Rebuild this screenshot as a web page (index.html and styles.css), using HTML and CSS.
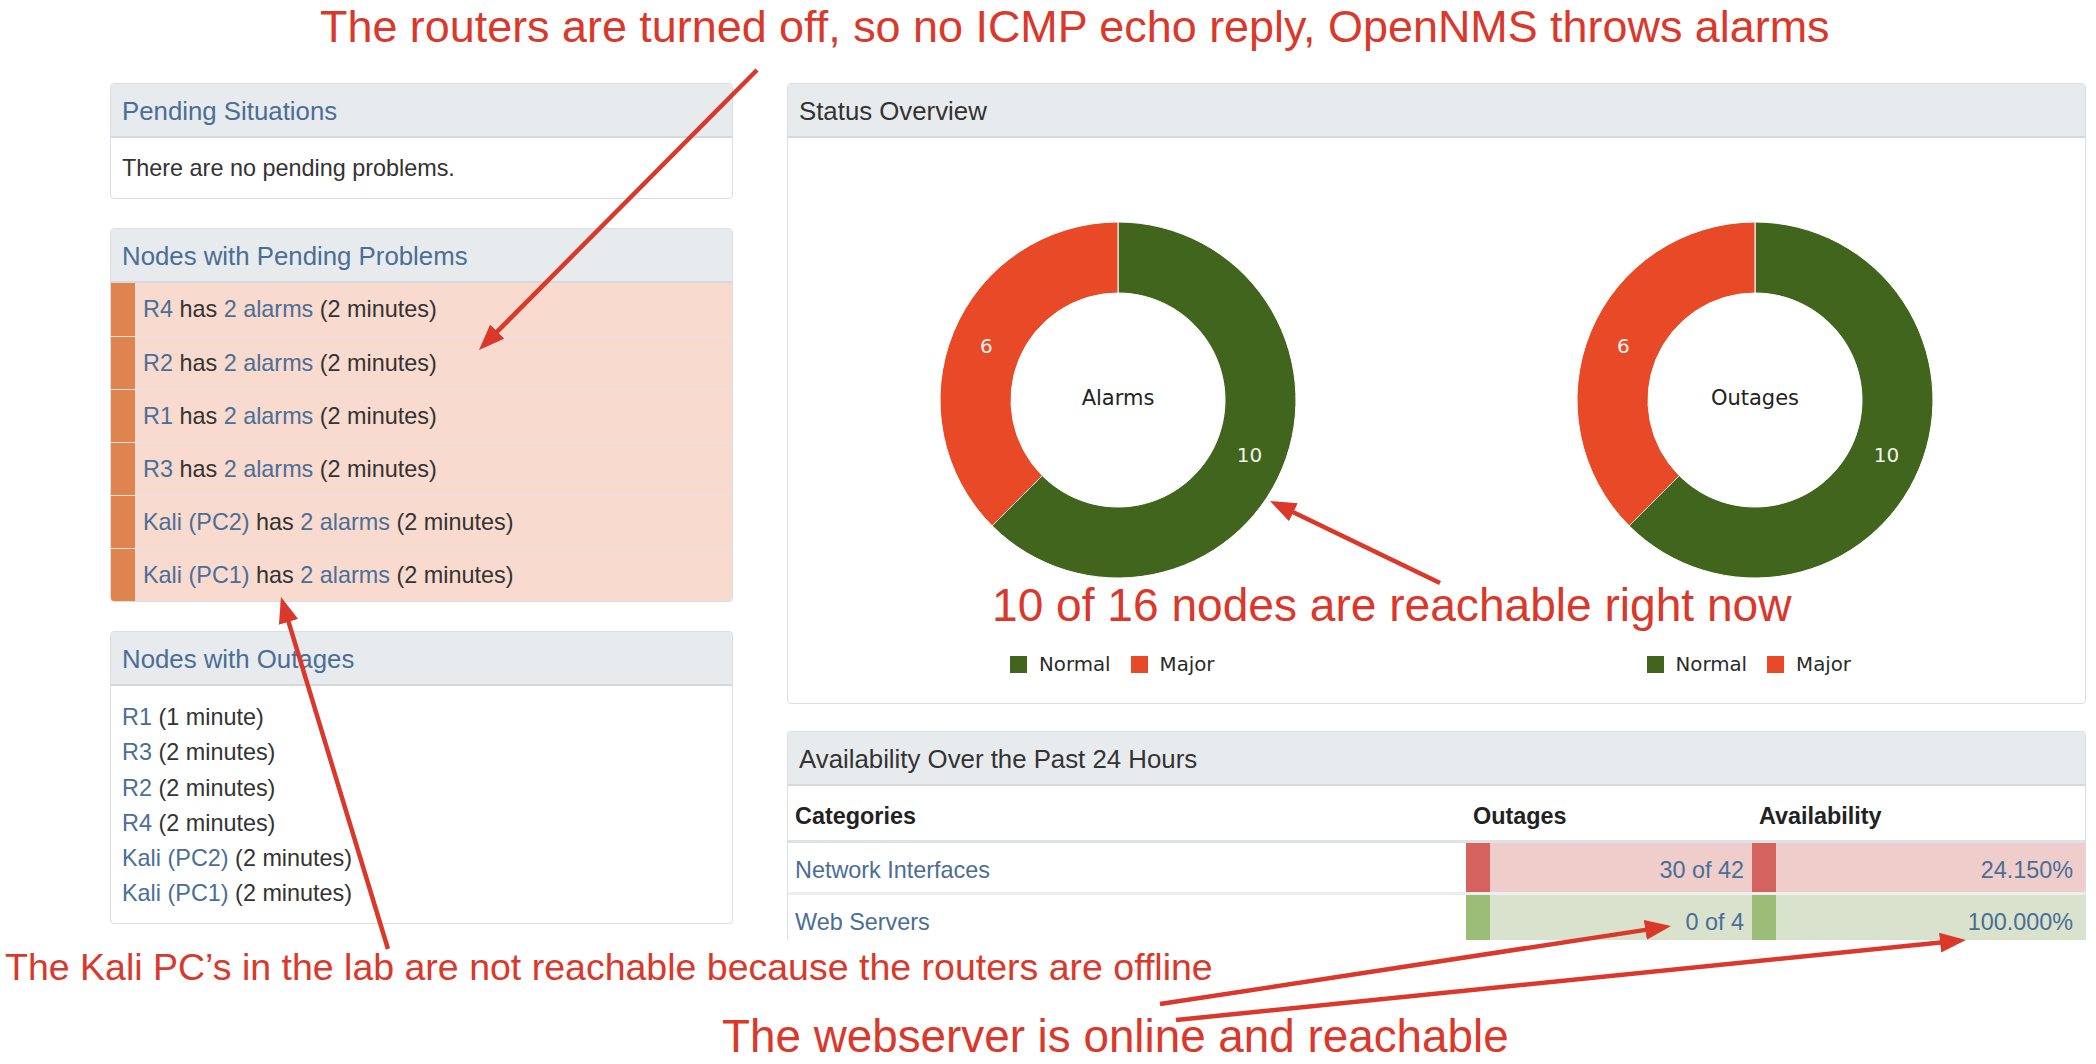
FILE: index.html
```html
<!DOCTYPE html>
<html lang="en">
<head>
<meta charset="utf-8">
<title>OpenNMS status</title>
<link rel="stylesheet" href="styles.css">
</head>
<body>
<div class="page">
  <header class="title-row">
    <span class="note note-top">The routers are turned off, so no ICMP echo reply, OpenNMS throws alarms</span>
  </header>

  <main class="layout">
    <section class="col-left">
      <div class="card">
        <div class="card-header"><a class="link">Pending Situations</a></div>
        <div class="card-body">There are no pending problems.</div>
      </div>

      <div class="card">
        <div class="card-header"><a class="link">Nodes with Pending Problems</a></div>
        <ul class="problem-list">
          <li class="problem"><span class="sev"></span><span class="ptext"><a class="link">R4</a> has <a class="link">2 alarms</a> (2 minutes)</span></li>
          <li class="problem"><span class="sev"></span><span class="ptext"><a class="link">R2</a> has <a class="link">2 alarms</a> (2 minutes)</span></li>
          <li class="problem"><span class="sev"></span><span class="ptext"><a class="link">R1</a> has <a class="link">2 alarms</a> (2 minutes)</span></li>
          <li class="problem"><span class="sev"></span><span class="ptext"><a class="link">R3</a> has <a class="link">2 alarms</a> (2 minutes)</span></li>
          <li class="problem"><span class="sev"></span><span class="ptext"><a class="link">Kali (PC2)</a> has <a class="link">2 alarms</a> (2 minutes)</span></li>
          <li class="problem"><span class="sev"></span><span class="ptext"><a class="link">Kali (PC1)</a> has <a class="link">2 alarms</a> (2 minutes)</span></li>
        </ul>
      </div>

      <div class="card">
        <div class="card-header"><a class="link">Nodes with Outages</a></div>
        <ul class="outage-list">
          <li><a class="link">R1</a> (1 minute)</li>
          <li><a class="link">R3</a> (2 minutes)</li>
          <li><a class="link">R2</a> (2 minutes)</li>
          <li><a class="link">R4</a> (2 minutes)</li>
          <li><a class="link">Kali (PC2)</a> (2 minutes)</li>
          <li><a class="link">Kali (PC1)</a> (2 minutes)</li>
        </ul>
      </div>
    </section>

    <section class="col-right">
      <div class="card">
        <div class="card-header plain">Status Overview</div>
        <div class="charts">
          <div class="chart">
            <svg class="donut" width="360" height="360" viewBox="0 0 360 360">
              <path class="slice-green" d="M180 2 A178 178 0 1 1 54.13 305.87 L104.34 255.66 A107 107 0 1 0 180 73 Z"/>
              <path class="slice-red" d="M54.13 305.87 A178 178 0 0 1 180 2 L180 73 A107 107 0 0 0 104.34 255.66 Z"/>
              <text class="slice-label" x="48.4" y="125.5">6</text>
              <text class="slice-label" x="311.6" y="234.5">10</text>
              <text class="center-label" x="180" y="178">Alarms</text>
            </svg>
            <div class="legend">
              <span class="legend-item"><span class="swatch swatch-green"></span>Normal</span>
              <span class="legend-item"><span class="swatch swatch-red"></span>Major</span>
            </div>
          </div>
          <div class="chart">
            <svg class="donut" width="360" height="360" viewBox="0 0 360 360">
              <path class="slice-green" d="M180 2 A178 178 0 1 1 54.13 305.87 L104.34 255.66 A107 107 0 1 0 180 73 Z"/>
              <path class="slice-red" d="M54.13 305.87 A178 178 0 0 1 180 2 L180 73 A107 107 0 0 0 104.34 255.66 Z"/>
              <text class="slice-label" x="48.4" y="125.5">6</text>
              <text class="slice-label" x="311.6" y="234.5">10</text>
              <text class="center-label" x="180" y="178">Outages</text>
            </svg>
            <div class="legend">
              <span class="legend-item"><span class="swatch swatch-green"></span>Normal</span>
              <span class="legend-item"><span class="swatch swatch-red"></span>Major</span>
            </div>
          </div>
        </div>
      </div>

      <div class="card avail">
        <div class="card-header plain">Availability Over the Past 24 Hours</div>
        <table class="avail-table">
          <colgroup>
            <col class="col-cat">
            <col class="col-out">
            <col class="col-av">
          </colgroup>
          <thead>
            <tr class="head-row"><th>Categories</th><th>Outages</th><th>Availability</th></tr>
          </thead>
          <tbody>
            <tr class="row-1">
              <td><a class="link">Network Interfaces</a></td>
              <td class="val bad"><a class="link">30 of 42</a></td>
              <td class="val bad pad-end"><a class="link">24.150%</a></td>
            </tr>
            <tr class="row-2">
              <td><a class="link">Web Servers</a></td>
              <td class="val good"><a class="link">0 of 4</a></td>
              <td class="val good pad-end"><a class="link">100.000%</a></td>
            </tr>
          </tbody>
        </table>
      </div>
    </section>
  </main>

  <div class="note note-nodes">10 of 16 nodes are reachable right now</div>
  <div class="note note-kali">The Kali PC’s in the lab are not reachable because the routers are offline</div>
  <div class="note note-web">The webserver is online and reachable</div>

  <svg class="arrows" width="2096" height="1064" viewBox="0 0 2096 1064">
    <defs>
      <marker id="head" markerUnits="userSpaceOnUse" viewBox="0 0 26 20" markerWidth="26" markerHeight="20" refX="20" refY="10" orient="auto">
        <path d="M0 0 L26 10 L0 20 Z" fill="#d9382a"/>
      </marker>
    </defs>
    <line x1="757" y1="70" x2="483.2" y2="345.7" class="arrow-line"/>
    <line x1="388" y1="949" x2="282.7" y2="602.7" class="arrow-line"/>
    <line x1="1440" y1="583" x2="1275.4" y2="503.6" class="arrow-line"/>
    <line x1="1160" y1="1004" x2="1665.1" y2="926.9" class="arrow-line"/>
    <line x1="1176" y1="1020" x2="1960" y2="940.6" class="arrow-line"/>
  </svg>
</div>
</body>
</html>
```

FILE: styles.css
```css
html, body {
  margin: 0;
  padding: 0;
  background: #ffffff;
}

body {
  font-family: "Liberation Sans", Arial, Helvetica, sans-serif;
  color: #333333;
}

.page {
  position: relative;
  width: 2096px;
  height: 1064px;
  overflow: hidden;
}

.note {
  color: #d9382a;
  font-family: "Liberation Sans", Arial, Helvetica, sans-serif;
  line-height: 1;
  white-space: nowrap;
}

.title-row {
  height: 83px;
  box-sizing: border-box;
  padding: 5px 0 0 320px;
}

.note-top {
  display: inline-block;
  font-size: 44.9px;
}

.layout {
  display: grid;
  grid-template-columns: 623px 1299px;
  column-gap: 54px;
  padding-left: 110px;
  align-items: start;
}

.col-left {
  display: flex;
  flex-direction: column;
  gap: 29px;
}

.col-right {
  display: flex;
  flex-direction: column;
  gap: 27px;
}

.card {
  border: 1px solid #dadee2;
  border-radius: 4px;
  background: #ffffff;
  overflow: hidden;
}

.card-header {
  height: 54px;
  box-sizing: border-box;
  background: #e8ebee;
  border-bottom: 2px solid #d5d9de;
  padding: 2px 11px 0;
  display: flex;
  align-items: center;
  font-size: 25.8px;
}

.card-header.plain {
  color: #333333;
}

.link {
  color: #4a6e96;
  text-decoration: none;
}

.card-body {
  height: 60px;
  box-sizing: border-box;
  padding: 0 11px;
  display: flex;
  align-items: center;
  font-size: 23.4px;
}

.problem-list {
  list-style: none;
  margin: 0;
  padding: 0;
}

.problem {
  display: flex;
  height: 53px;
  box-sizing: border-box;
  background: #f8dace;
  border-top: 1px solid #ece2dd;
  font-size: 23.4px;
}

.problem:first-child {
  border-top: none;
}

.sev {
  width: 24px;
  flex: none;
  background: #df844f;
}

.ptext {
  display: flex;
  align-items: center;
  padding-left: 8px;
  white-space: pre;
}

.outage-list {
  list-style: none;
  margin: 0;
  padding: 14px 11px 11px;
  font-size: 23.4px;
  line-height: 35.3px;
}

.charts {
  display: grid;
  grid-template-columns: 1fr 1fr;
  padding: 82px 12px 27px;
}

.chart {
  display: flex;
  flex-direction: column;
  align-items: center;
}

.donut {
  display: block;
}

.slice-green {
  fill: #41651c;
  stroke: #ffffff;
  stroke-width: 1;
}

.slice-red {
  fill: #e84a27;
  stroke: #ffffff;
  stroke-width: 1;
}

.slice-label {
  font-family: "DejaVu Sans", sans-serif;
  font-size: 20px;
  fill: #f2f2f2;
  text-anchor: middle;
  dominant-baseline: central;
}

.center-label {
  font-family: "DejaVu Sans", sans-serif;
  font-size: 21px;
  fill: #222222;
  text-anchor: middle;
  dominant-baseline: central;
}

.legend {
  margin-top: 72px;
  margin-right: 12px;
  height: 24px;
  display: flex;
  align-items: center;
  gap: 20px;
  font-family: "DejaVu Sans", sans-serif;
  font-size: 19.8px;
  color: #2a2a2a;
}

.legend-item {
  display: flex;
  align-items: center;
  gap: 12px;
}

.swatch {
  width: 17px;
  height: 17px;
}

.swatch-green {
  background: #41651c;
}

.swatch-red {
  background: #e84a27;
}

.avail {
  border-bottom: none;
  border-radius: 4px 4px 0 0;
}

.avail-table {
  width: 100%;
  table-layout: fixed;
  border-collapse: collapse;
  font-size: 23.4px;
}

.col-cat {
  width: 678px;
}

.col-out {
  width: 286px;
}

.head-row {
  height: 55px;
}

.row-1 {
  height: 52px;
}

.row-2 {
  height: 47px;
}

.avail-table th {
  text-align: left;
  font-weight: bold;
  color: #222222;
  padding: 7px 7px 0;
  vertical-align: middle;
  border-bottom: 3px solid #dee2e6;
  white-space: nowrap;
}

.avail-table td {
  padding: 7px 7px 0;
  vertical-align: middle;
  white-space: nowrap;
}

.avail-table .row-2 td {
  border-top: 3px solid #eceeef;
  padding-top: 10px;
}

.val {
  text-align: right;
}

.avail-table td.val {
  padding-right: 8px;
}

.avail-table td.val.pad-end {
  padding-right: 12px;
}

.bad {
  background: #eecdcb;
  box-shadow: inset 24px 0 0 #d4625e;
}

.good {
  background: #d9e2cd;
  box-shadow: inset 24px 0 0 #9cbd77;
}

.note-nodes {
  position: absolute;
  left: 992px;
  top: 582px;
  font-size: 46.1px;
}

.note-kali {
  position: absolute;
  left: 5px;
  top: 949px;
  font-size: 37.5px;
}

.note-web {
  position: absolute;
  left: 722px;
  top: 1014px;
  font-size: 45.8px;
}

.arrows {
  position: absolute;
  left: 0;
  top: 0;
  pointer-events: none;
}

.arrow-line {
  stroke: #d9382a;
  stroke-width: 4.5;
  marker-end: url(#head);
}
```
